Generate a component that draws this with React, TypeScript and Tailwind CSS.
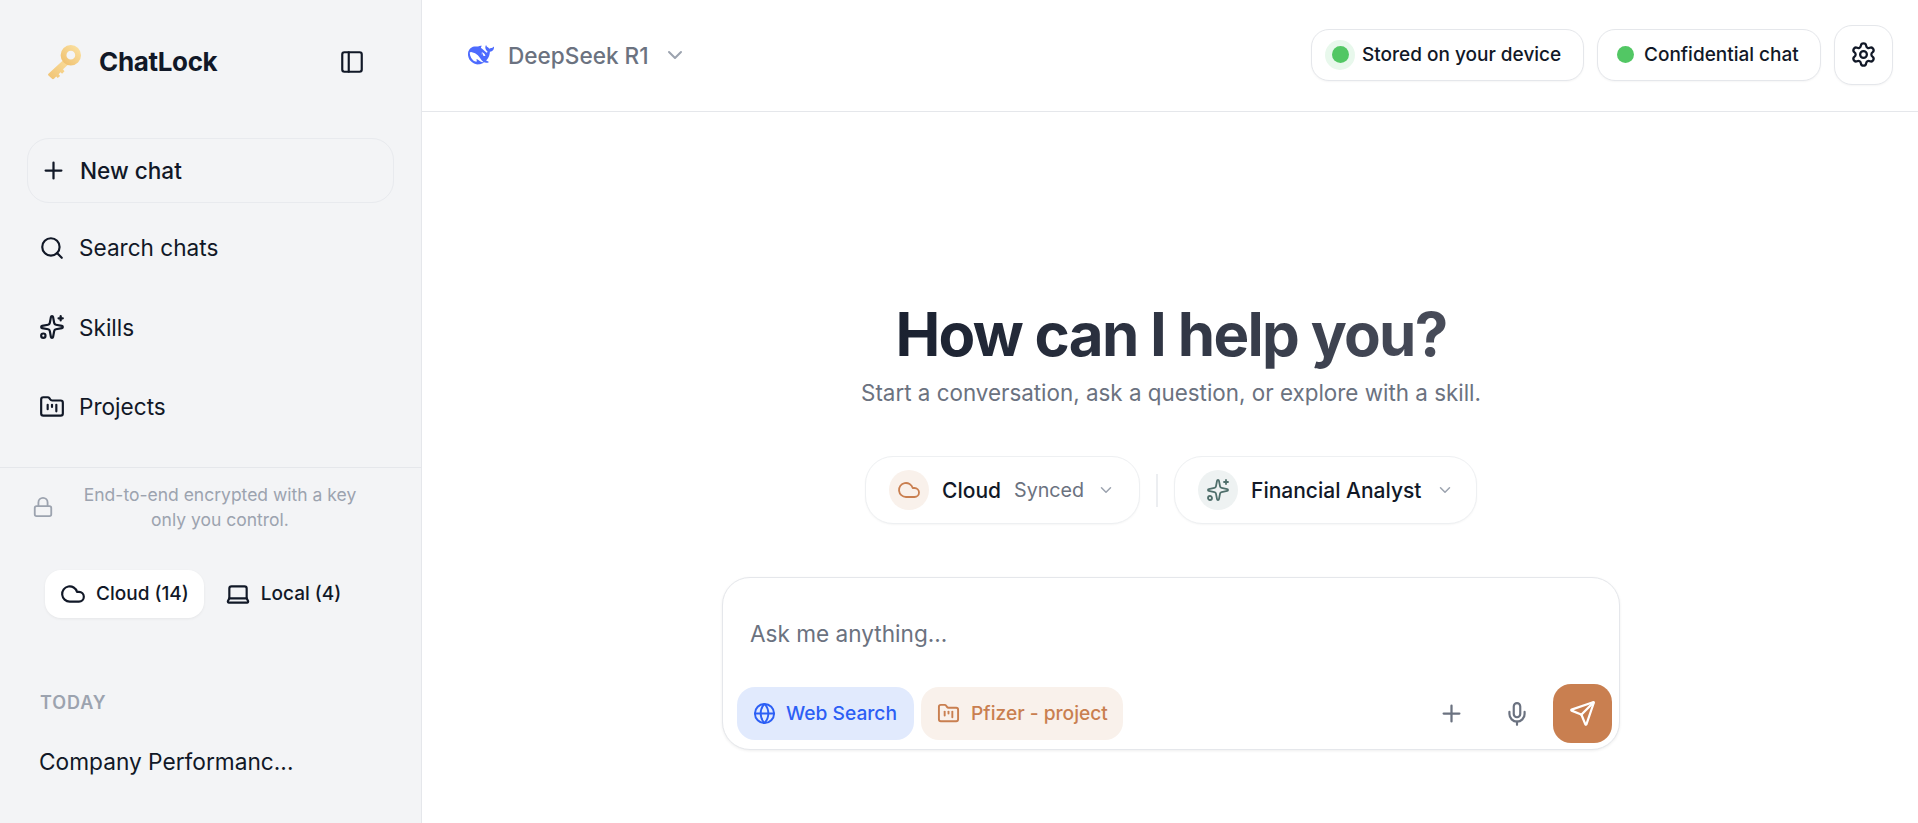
import React from "react";
import {
  ChevronDown,
  Cloud,
  FolderKanban,
  Globe,
  Laptop,
  Lock,
  Mic,
  PanelLeft,
  Plus,
  Search,
  Send,
  Settings,
  Sparkles,
} from "lucide-react";

const KeyLogo: React.FC = () => (
  <svg className="ml-[1px]" width="35" height="38" viewBox="0 0 36 38" fill="none">
    <defs>
      <linearGradient id="keyGold" x1="0" y1="1" x2="1" y2="0">
        <stop offset="0" stopColor="#f0c272" />
        <stop offset="1" stopColor="#fadf9f" />
      </linearGradient>
    </defs>
    <path
      d="M18.5 15.5 L1.5 31 Q0.5 32 1.5 33 L5.5 36.5 Q6.5 37 7.5 36 L9.5 34 L11 35.5 L13.5 33.5 L12 31.5 L14 29.5 L15.5 31 L18 28.5 L16.5 26.5 L23.5 20 Z"
      fill="url(#keyGold)"
    />
    <circle cx="24.5" cy="12" r="7.5" stroke="url(#keyGold)" strokeWidth="6" fill="none" />
  </svg>
);

const WhaleLogo: React.FC = () => (
  <svg width="26" height="26" viewBox="0 0 24 24" fill="#4d6bfe" fillRule="evenodd">
    <path d="M23.748 4.482c-.254-.124-.364.113-.512.234-.051.039-.094.09-.137.136-.372.397-.806.657-1.373.626-.829-.046-1.537.214-2.163.848-.133-.782-.575-1.248-1.247-1.548-.352-.156-.708-.311-.955-.65-.172-.241-.219-.51-.305-.774-.055-.16-.11-.323-.293-.35-.2-.031-.278.136-.356.276-.313.572-.434 1.202-.422 1.84.027 1.436.633 2.58 1.838 3.393.137.093.172.187.129.323-.082.28-.18.552-.266.833-.055.179-.137.217-.329.14a5.526 5.526 0 01-1.736-1.18c-.857-.828-1.631-1.742-2.597-2.458a11.365 11.365 0 00-.689-.471c-.985-.957.13-1.743.388-1.836.27-.098.093-.432-.779-.428-.872.004-1.67.295-2.687.684a3.055 3.055 0 01-.465.137 9.597 9.597 0 00-2.883-.102c-1.885.21-3.39 1.102-4.497 2.623C.082 8.606-.231 10.684.152 12.85c.403 2.284 1.569 4.175 3.36 5.653 1.858 1.533 3.997 2.284 6.438 2.14 1.482-.085 3.133-.284 4.994-1.86.47.234.962.327 1.78.397.63.059 1.236-.03 1.705-.128.735-.156.684-.837.419-.961-2.155-1.004-1.682-.595-2.113-.926 1.096-1.296 2.746-2.642 3.392-7.003.05-.347.007-.565 0-.845-.004-.17.035-.237.23-.256a4.173 4.173 0 001.545-.475c1.396-.763 1.96-2.015 2.093-3.517.02-.23-.004-.467-.247-.588zM11.581 18c-2.089-1.642-3.102-2.183-3.52-2.16-.392.024-.321.471-.235.763.09.288.207.486.371.739.114.167.192.416-.113.603-.673.416-1.842-.14-1.897-.167-1.361-.802-2.5-1.86-3.301-3.307-.774-1.393-1.224-2.887-1.298-4.482-.02-.386.093-.522.477-.592a4.696 4.696 0 011.529-.039c2.132.312 3.946 1.265 5.468 2.774.868.86 1.525 1.887 2.202 2.891.72 1.066 1.494 2.082 2.48 2.914.348.292.625.514.891.677-.802.09-2.14.11-3.054-.614zm1.044-6.72a.306.306 0 01.415-.287.302.302 0 01.2.288.306.306 0 01-.31.307.303.303 0 01-.304-.308zm3.11 1.596c-.2.081-.399.151-.59.16a1.245 1.245 0 01-.798-.254c-.274-.23-.47-.358-.552-.758a1.73 1.73 0 01.016-.588c.07-.327-.008-.537-.239-.727-.187-.156-.426-.199-.688-.199a.559.559 0 01-.254-.078c-.11-.054-.2-.19-.114-.358.028-.054.16-.186.192-.21.356-.202.767-.136 1.146.016.352.144.618.408 1.001.782.391.451.462.576.685.914.176.265.336.537.445.848.067.195-.019.354-.25.452z" />
  </svg>
);

const NavItem: React.FC<{ icon: React.ReactNode; label: string }> = ({ icon, label }) => (
  <div className="flex items-center h-[79.5px] pl-[39px] gap-[14px] text-[22.6px] text-[#111827]">
    {icon}
    <span className="pt-[1px]">{label}</span>
  </div>
);

const Sidebar: React.FC = () => (
  <aside className="w-[422px] shrink-0 h-full bg-[#f3f4f6] border-r border-[#e5e7eb] flex flex-col overflow-hidden">
    <div className="flex items-center h-[123px] pl-[46px] pr-[56px]">
      <KeyLogo />
      <span className="ml-[17px] text-[26px] font-bold text-[#111827] tracking-[-0.35px]">ChatLock</span>
      <PanelLeft className="ml-auto text-[#111827]" size={26} strokeWidth={2} />
    </div>
    <div className="mx-[27px] mt-[15px] h-[65px] rounded-[22px] border border-[#e8eaee] flex items-center pl-[12px] gap-[13px] text-[22.6px] font-medium text-[#111827]">
      <Plus size={27} strokeWidth={2} />
      <span>New chat</span>
    </div>
    <div className="mt-[5px]">
      <NavItem icon={<Search size={26} strokeWidth={2} />} label="Search chats" />
      <NavItem icon={<Sparkles size={26} strokeWidth={2} />} label="Skills" />
      <NavItem icon={<FolderKanban size={26} strokeWidth={2} />} label="Projects" />
    </div>
    <div className="mt-[20.5px] border-t border-[#e5e7eb] pt-[14px] pl-[32px] flex items-center">
      <Lock className="text-[#9ca3af] shrink-0" size={22} strokeWidth={2} />
      <p className="w-[290px] ml-[21px] text-center text-[17.5px] leading-[25px] text-[#9ca3af]">
        End-to-end encrypted with a key only you control.
      </p>
    </div>
    <div className="mt-[38px] ml-[45px] flex items-center gap-[6px] text-[19px] font-medium text-[#111827]">
      <div className="flex items-center gap-[10px] h-[48px] pl-[15px] pr-[15px] rounded-[16px] bg-white shadow-[0_1px_3px_rgba(0,0,0,0.06)]">
        <Cloud size={26} strokeWidth={2} />
        <span className="pt-[1px]">Cloud (14)</span>
      </div>
      <div className="flex items-center gap-[10px] h-[48px] px-[15px]">
        <Laptop size={26} strokeWidth={2} />
        <span className="pt-[1px]">Local (4)</span>
      </div>
    </div>
    <div className="mt-[73px] pl-[40px] text-[18px] font-semibold tracking-[0.9px] text-[#9ca3af] leading-[24px]">
      TODAY
    </div>
    <div className="mt-[31px] pl-[39px] text-[22.7px] text-[#111827] leading-[32px]">Company Performanc...</div>
  </aside>
);

const Header: React.FC = () => (
  <header className="h-[112px] shrink-0 border-b border-[#e5e7eb] flex items-center pl-[46px] pr-[25px]">
    <div className="flex items-center -mt-[1px] text-[22.6px] font-medium text-[#6b7280]">
      <WhaleLogo />
      <span className="ml-[14px] pt-[1px]">DeepSeek R1</span>
      <ChevronDown className="ml-[14px] text-[#9ca3af]" size={24} strokeWidth={2} />
    </div>
    <div className="ml-auto flex items-center gap-[13px] -mt-[2px] text-[19px] font-medium text-[#111827]">
      <div className="h-[52px] w-[273px] rounded-[18px] border border-[#e5e7eb] bg-white shadow-[0_1px_2px_rgba(0,0,0,0.04)] flex items-center pl-[13px] gap-[7px]">
        <span className="w-[30px] h-[30px] rounded-full bg-[#e8f8ec] flex items-center justify-center">
          <span className="w-[17px] h-[17px] rounded-full bg-[#52c764]" />
        </span>
        <span className="pt-[2px]">Stored on your device</span>
      </div>
      <div className="h-[52px] w-[224px] rounded-[18px] border border-[#e5e7eb] bg-white shadow-[0_1px_2px_rgba(0,0,0,0.04)] flex items-center pl-[19px] gap-[10px]">
        <span className="w-[17px] h-[17px] rounded-full bg-[#52c764]" />
        <span className="pt-[2px]">Confidential chat</span>
      </div>
      <div className="h-[60px] w-[59px] rounded-[18px] border border-[#e5e7eb] bg-white shadow-[0_1px_2px_rgba(0,0,0,0.04)] flex items-center justify-center">
        <Settings size={27} strokeWidth={2} />
      </div>
    </div>
  </header>
);

const Selectors: React.FC = () => (
  <div className="flex items-center mt-[48px] text-[21px] font-medium text-[#111827]">
    <div className="h-[68px] w-[275px] rounded-[28px] border border-[#eef0f2] bg-white shadow-[0_1px_2px_rgba(0,0,0,0.04)] flex items-center pl-[23px]">
      <span className="w-[40px] h-[40px] rounded-full bg-[#f9f1eb] flex items-center justify-center">
        <Cloud className="text-[#c97f50]" size={24} strokeWidth={1.8} />
      </span>
      <span className="ml-[13px] pt-[2px]">Cloud</span>
      <span className="ml-[13px] pt-[2px] text-[19.7px] font-normal text-[#6b7280]">Synced</span>
      <ChevronDown className="ml-[13px] text-[#9ca3af]" size={18} strokeWidth={2} />
    </div>
    <div className="w-[2px] h-[33px] bg-[#eceef1] mx-[16px]" />
    <div className="h-[68px] w-[303px] rounded-[28px] border border-[#eef0f2] bg-white shadow-[0_1px_2px_rgba(0,0,0,0.04)] flex items-center pl-[23px]">
      <span className="w-[40px] h-[40px] rounded-full bg-[#eef2f2] flex items-center justify-center">
        <Sparkles className="text-[#4f6f6b]" size={24} strokeWidth={1.8} />
      </span>
      <span className="ml-[13px] pt-[2px]">Financial Analyst</span>
      <ChevronDown className="ml-[14px] text-[#9ca3af]" size={18} strokeWidth={2} />
    </div>
  </div>
);

const Composer: React.FC = () => (
  <div className="mt-[53px] w-[898px] h-[173px] rounded-[28px] border border-[#e5e7eb] bg-white shadow-[0_1px_3px_rgba(0,0,0,0.07)] flex flex-col pl-[14px] pr-[7px]">
    <div className="pl-[13px] pt-[40px] text-[22.6px] leading-[32px] text-[#6b7280]">Ask me anything...</div>
    <div className="mt-auto mb-[6px] flex items-end text-[19px] font-medium">
      <div className="h-[53px] w-[177px] mb-[3px] rounded-[18px] bg-[#e1eafd] text-[#2c5ff5] flex items-center pl-[16px] gap-[10px]">
        <Globe size={23} strokeWidth={2} />
        <span className="text-[19.2px]">Web Search</span>
      </div>
      <div className="h-[53px] w-[202px] mb-[3px] ml-[7px] rounded-[18px] bg-[#f9f1eb] text-[#c97f50] flex items-center pl-[16px] gap-[11px]">
        <FolderKanban size={23} strokeWidth={2} />
        <span className="text-[19.2px]">Pfizer - project</span>
      </div>
      <div className="ml-auto flex items-center self-center gap-[39px] mr-[23px] text-[#6b7280]">
        <Plus size={27} strokeWidth={2} />
        <Mic size={26} strokeWidth={2} />
      </div>
      <div className="w-[59px] h-[59px] rounded-[18px] bg-[#c97f50] flex items-center justify-center text-white">
        <Send size={27} strokeWidth={2} />
      </div>
    </div>
  </div>
);

const App: React.FC = () => (
  <div className="h-screen w-full flex overflow-hidden bg-white font-['Inter',sans-serif]">
    <Sidebar />
    <main className="flex-1 min-w-0 flex flex-col">
      <Header />
      <div className="flex flex-col items-center pt-[185px] pl-[2px]">
        <h1 className="text-[60px] leading-[74px] font-bold tracking-[-1.7px] text-transparent bg-clip-text bg-gradient-to-r from-[#1a2130] to-[#484c59]">
          How can I help you?
        </h1>
        <p className="mt-[7px] text-[22.4px] leading-[30px] text-[#6b7280]">
          Start a conversation, ask a question, or explore with a skill.
        </p>
        <Selectors />
        <Composer />
      </div>
    </main>
  </div>
);

export default App;
